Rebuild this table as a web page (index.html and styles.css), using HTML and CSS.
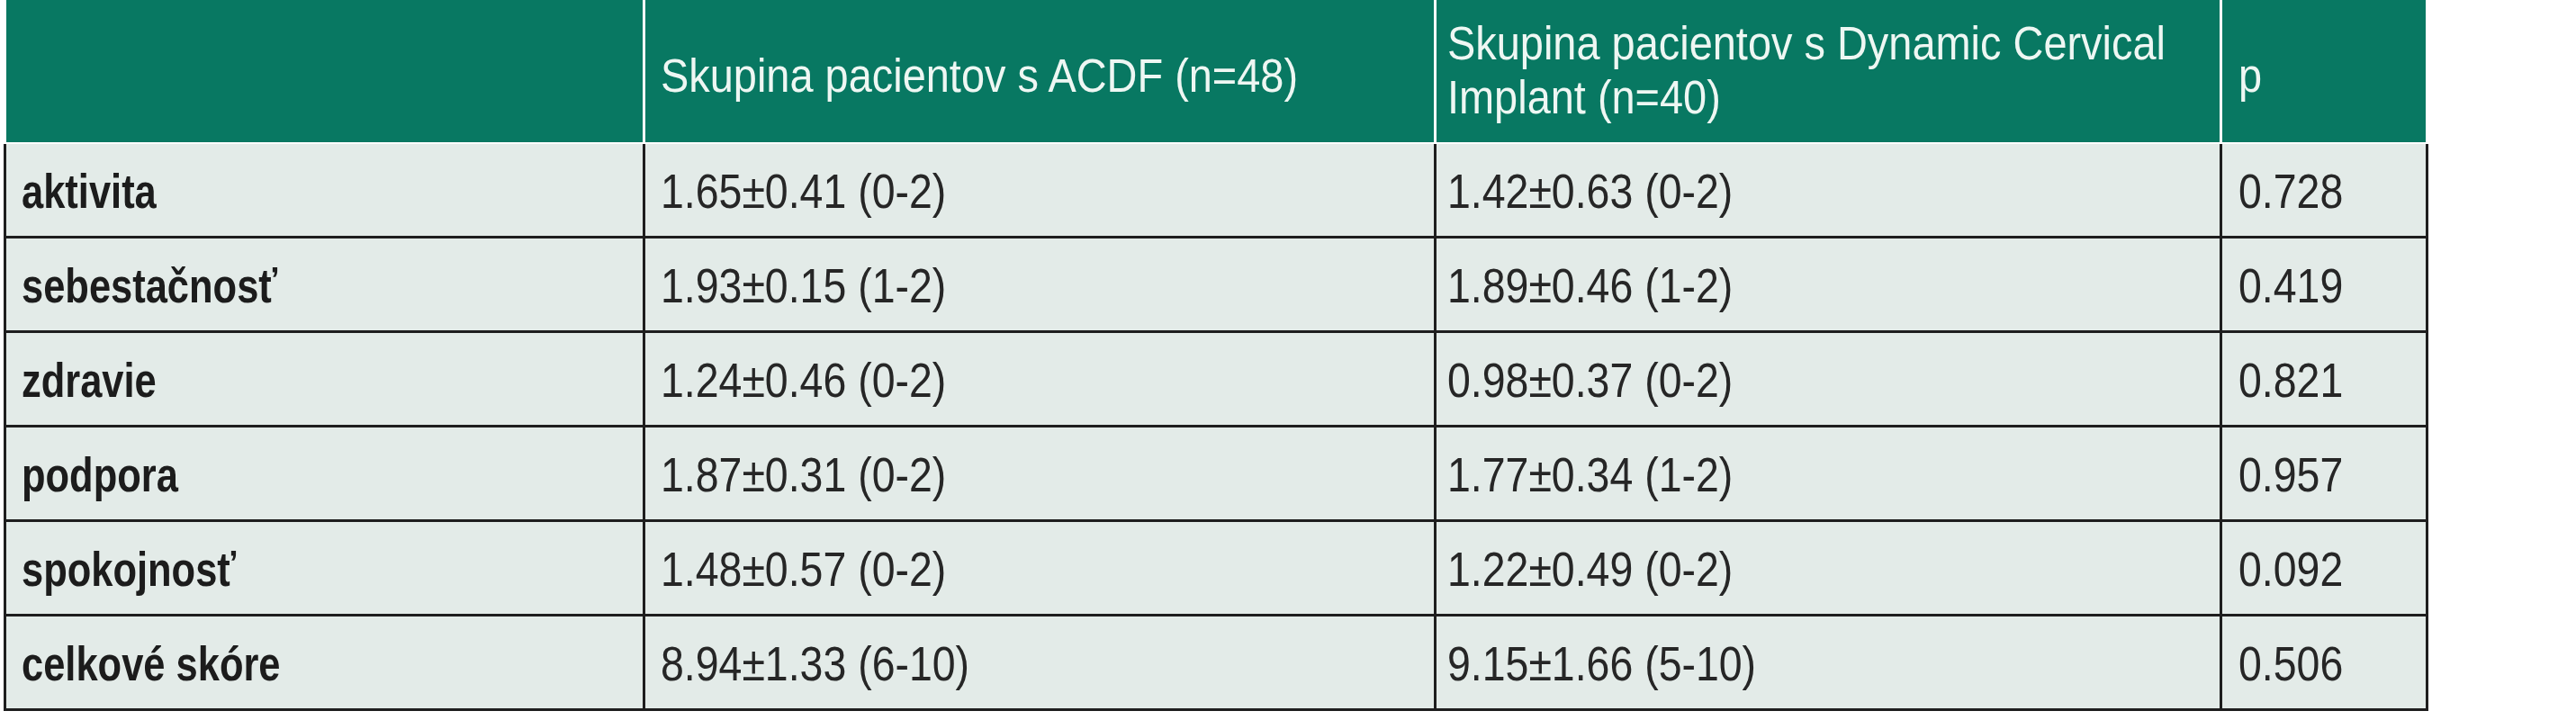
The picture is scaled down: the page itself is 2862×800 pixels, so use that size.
FILE: index.html
```html
<!DOCTYPE html>
<html lang="sk">
<head>
<meta charset="utf-8">
<title>Tabuľka</title>
<link rel="stylesheet" href="styles.css">
</head>
<body>
<div class="table">
  <div class="head">
    <div class="hcell"></div>
    <div class="hcell single"><span class="txt">Skupina pacientov s ACDF (n=48)</span></div>
    <div class="hcell c3"><span class="txt">Skupina pacientov s Dynamic Cervical<br>Implant (n=40)</span></div>
    <div class="hcell c4 single"><span class="txt">p</span></div>
  </div>
  <div class="body">
    <div class="cell label"><span class="txt">aktivita</span></div>
    <div class="cell"><span class="txt">1.65±0.41 (0-2)</span></div>
    <div class="cell c3"><span class="txt">1.42±0.63 (0-2)</span></div>
    <div class="cell c4"><span class="txt">0.728</span></div>

    <div class="cell label"><span class="txt">sebestačnosť</span></div>
    <div class="cell"><span class="txt">1.93±0.15 (1-2)</span></div>
    <div class="cell c3"><span class="txt">1.89±0.46 (1-2)</span></div>
    <div class="cell c4"><span class="txt">0.419</span></div>

    <div class="cell label"><span class="txt">zdravie</span></div>
    <div class="cell"><span class="txt">1.24±0.46 (0-2)</span></div>
    <div class="cell c3"><span class="txt">0.98±0.37 (0-2)</span></div>
    <div class="cell c4"><span class="txt">0.821</span></div>

    <div class="cell label"><span class="txt">podpora</span></div>
    <div class="cell"><span class="txt">1.87±0.31 (0-2)</span></div>
    <div class="cell c3"><span class="txt">1.77±0.34 (1-2)</span></div>
    <div class="cell c4"><span class="txt">0.957</span></div>

    <div class="cell label"><span class="txt">spokojnosť</span></div>
    <div class="cell"><span class="txt">1.48±0.57 (0-2)</span></div>
    <div class="cell c3"><span class="txt">1.22±0.49 (0-2)</span></div>
    <div class="cell c4"><span class="txt">0.092</span></div>

    <div class="cell label"><span class="txt">celkové skóre</span></div>
    <div class="cell"><span class="txt">8.94±1.33 (6-10)</span></div>
    <div class="cell c3"><span class="txt">9.15±1.66 (5-10)</span></div>
    <div class="cell c4"><span class="txt">0.506</span></div>
  </div>
</div>
</body>
</html>
```
FILE: styles.css
```css
html, body {
  margin: 0;
  padding: 0;
  background: #ffffff;
}

.table {
  margin-left: 4px;
  width: 2694px;
}

.txt {
  display: inline-block;
  white-space: nowrap;
  transform-origin: left center;
}

.head {
  display: grid;
  grid-template-columns: 707px 876px 870px 226px;
  column-gap: 3px;
  padding: 0 3px 2px 3px;
  background: #ffffff;
}

.hcell {
  height: 158px;
  background: #087862;
  color: #eef7f3;
  font-family: "Liberation Sans", Arial, sans-serif;
  font-size: 51px;
  line-height: 60px;
  display: flex;
  align-items: center;
  padding-left: 17px;
  box-sizing: border-box;
}

.hcell .txt {
  transform: scaleX(0.92);
}

.hcell.single {
  padding-top: 12px;
}

.body {
  display: grid;
  grid-template-columns: 707px 876px 870px 226px;
  grid-auto-rows: 102px;
  gap: 3px;
  padding: 0 3px 3px 3px;
  background: #1e1e1e;
}

.cell {
  background: #e3ebe8;
  color: #262626;
  font-family: "Liberation Sans", Arial, sans-serif;
  font-size: 54px;
  display: flex;
  align-items: center;
  padding-left: 17px;
  padding-top: 2px;
  box-sizing: border-box;
}

.cell .txt {
  transform: scaleX(0.86);
}

.label {
  font-weight: bold;
  font-size: 53px;
  color: #1c1c1c;
}

.label .txt {
  transform: scaleX(0.82);
}

.c3 {
  padding-left: 12px;
}

.c4 {
  padding-left: 18px;
}
```
